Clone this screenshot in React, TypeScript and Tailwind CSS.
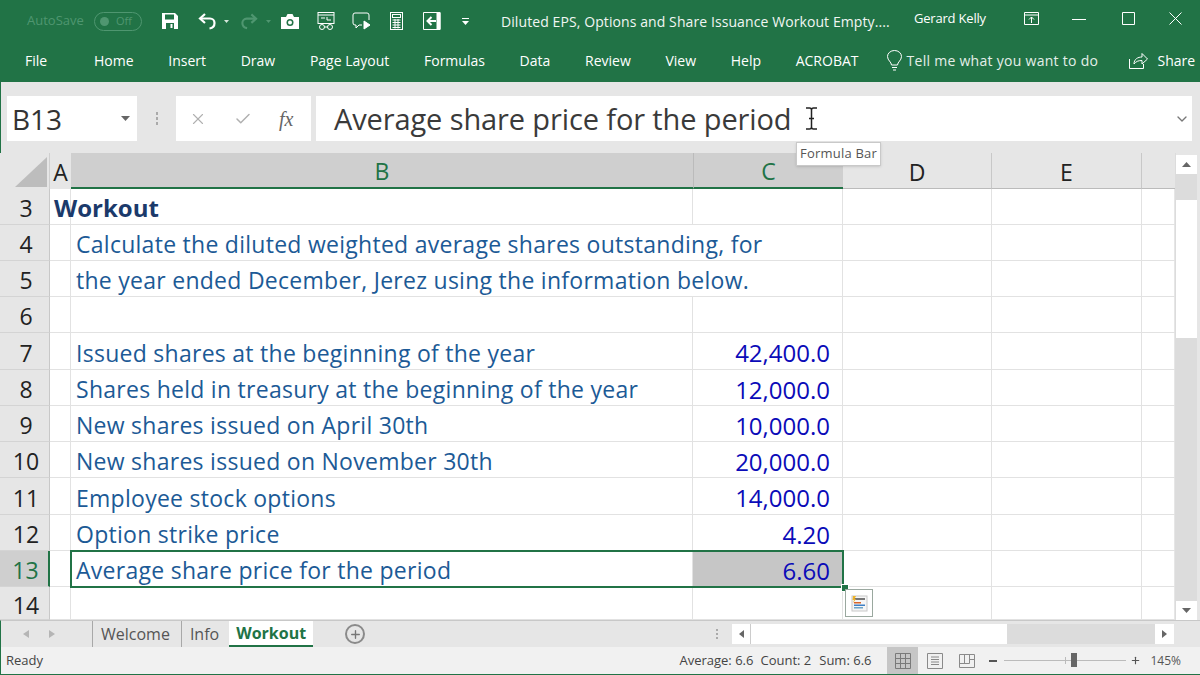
import { Check, ChevronDown, Plus, X } from "lucide-react"

const font = { fontFamily: '"Open Sans", "Noto Sans", sans-serif' }

const tabs = ["Home", "Insert", "Draw", "Page Layout", "Formulas", "Data", "Review", "View", "Help", "ACROBAT"]

const rows = [
  { n: "3", b: "", c: "", title: "Workout", h: "h-[36px]" },
  { n: "4", b: "Calculate the diluted weighted average shares outstanding, for", c: "", h: "h-[36px]", spill: true },
  { n: "5", b: "the year ended December, Jerez using the information below.", c: "", h: "h-[36px]", spill: true },
  { n: "6", b: "", c: "", h: "h-[36px]" },
  { n: "7", b: "Issued shares at the beginning of the year", c: "42,400.0", h: "h-[37px]" },
  { n: "8", b: "Shares held in treasury at the beginning of the year", c: "12,000.0", h: "h-[36px]" },
  { n: "9", b: "New shares issued on April 30th", c: "10,000.0", h: "h-[36px]" },
  { n: "10", b: "New shares issued on November 30th", c: "20,000.0", h: "h-[36px]" },
  { n: "11", b: "Employee stock options", c: "14,000.0", h: "h-[37px]" },
  { n: "12", b: "Option strike price", c: "4.20", h: "h-[36px]" },
  { n: "13", b: "Average share price for the period", c: "6.60", h: "h-[36px]", active: true },
  { n: "14", b: "", c: "", h: "h-[33px]" },
]

const gridCols = "grid grid-cols-[50px_21px_622px_150px_149px_150px_33px]"

function TitleIcons() {
  return (
    <>
      <svg className="ml-[19px] w-[18px] h-[18px]" viewBox="0 0 18 18" fill="white">
        <path d="M1 1h13l3 3v13H1z" />
        <rect x="4" y="2.500" width="9" height="5" fill="#217346" />
        <rect x="5" y="11" width="8" height="6" fill="#217346" />
        <rect x="9.500" y="12" width="2" height="4" fill="white" />
      </svg>
      <svg className="ml-[19px] w-[19px] h-[18px]" viewBox="0 0 19 18" fill="none" stroke="white" strokeWidth="2.200">
        <path d="M7 2 2 6.500 7 11" />
        <path d="M2.500 6.500H12a4.500 4.500 0 0 1 4.500 4.500c0 3-2 5-5 5.500" />
      </svg>
      <svg className="ml-[7px] w-[5px] h-[3px]" viewBox="0 0 5 3" fill="#d6e6dc">
        <path d="M0 0h5L2.500 3z" />
      </svg>
      <svg className="ml-[11px] w-[18px] h-[18px]" viewBox="0 0 19 18" fill="none" stroke="#4f9670" strokeWidth="2.200">
        <path d="M12 2l5 4.500L12 11" />
        <path d="M16.500 6.500H7A4.500 4.500 0 0 0 2.500 11c0 3 2 5 5 5.500" />
      </svg>
      <svg className="ml-[8px] w-[5px] h-[3px]" viewBox="0 0 5 3" fill="#4f9670">
        <path d="M0 0h5L2.500 3z" />
      </svg>
      <svg className="ml-[10px] w-[18px] h-[15px]" viewBox="0 0 18 15">
        <path d="M0 3h5l1.500-3h5L13 3h5v12H0z" fill="white" />
        <circle cx="9" cy="8.500" r="3.500" fill="#217346" />
        <circle cx="9" cy="8.500" r="2" fill="white" />
      </svg>
      <svg className="ml-[18px] w-[18px] h-[18px]" viewBox="0 0 18 18" fill="none" stroke="white" strokeWidth="1">
        <rect x="1" y="0.500" width="16" height="11" />
        <path d="M1 3h16M4 6h4M10 5v3h4" />
        <circle cx="5" cy="15" r="2.500" />
        <circle cx="13" cy="15" r="2.500" />
        <path d="M7.500 15h3" />
      </svg>
      <svg className="ml-[17px] w-[19px] h-[18px]" viewBox="0 0 19 18" fill="none" stroke="white" strokeWidth="1">
        <path d="M3 1h12a2 2 0 0 1 2 2v5M10 13H7l-3 3v-3H3a2 2 0 0 1-2-2V3a2 2 0 0 1 2-2" />
        <path d="M12 9l6 4-6 4z" fill="white" />
      </svg>
      <svg className="ml-[19px] w-[13px] h-[18px]" viewBox="0 0 13 18" fill="none" stroke="white" strokeWidth="1">
        <rect x="0.500" y="0.500" width="12" height="17" />
        <rect x="2.500" y="2.500" width="8" height="3" />
        <path d="M2.500 8h8M2.500 10.500h8M2.500 13h8M2.500 15.500h8M5 7v9.500M8 7v9.500" />
      </svg>
      <svg className="ml-[20px] w-[18px] h-[18px]" viewBox="0 0 18 18" fill="none" stroke="white">
        <path d="M0.500 0.500h16.500v17H0.500z" />
        <path d="M13 9H5M8.500 5 4.500 9l4 4" strokeWidth="2" />
        <path d="M14 0.500h3v17h-3z" fill="white" />
      </svg>
      <svg className="ml-[21px] w-[7px] h-[7px]" viewBox="0 0 7 7" fill="white">
        <path d="M0 0h7v1H0zM0 3h7L3.500 7z" />
      </svg>
    </>
  )
}

function ViewIcons() {
  return (
    <div className="ml-[16px] flex items-center h-full">
      <div className="w-[31px] h-full bg-[#c6c6c6] flex items-center justify-center">
        <svg className="w-[16px] h-[16px]" viewBox="0 0 16 16" fill="none" stroke="#7a7a7a">
          <path d="M0.500 0.500h15v15h-15zM0.500 5.500h15M0.500 10.500h15M5.500 0.500v15M10.500 0.500v15" />
        </svg>
      </div>
      <svg className="ml-[9px] w-[16px] h-[16px]" viewBox="0 0 16 16" fill="none" stroke="#8a8a8a">
        <path d="M0.500 0.500h15v15h-15zM4 4h8M4 6.500h8M4 9h8M4 11.500h8" />
      </svg>
      <svg className="ml-[16px] w-[16px] h-[14px]" viewBox="0 0 16 14" fill="none" stroke="#8a8a8a">
        <path d="M0.500 0.500h15v13h-15zM0.500 9.500h10v-9M5.500 0.500v9M10.500 5.500h5" />
      </svg>
    </div>
  )
}

export default function App() {
  return (
    <div className="w-[1200px] h-[675px] overflow-hidden flex flex-col bg-[#e6e6e6] relative" style={font}>
      {/* title bar */}
      <div className="h-[42px] bg-[#217346] flex items-center text-white shrink-0">
        <span className="ml-[27px] text-[13px] text-[#4f9670] w-[62px]">AutoSave</span>
        <div className="ml-[5px] w-[48px] h-[19px] rounded-full border border-[#4f9670] flex items-center px-[5px] text-[11px] text-[#4f9670]">
          <span className="w-[9px] h-[9px] rounded-full bg-[#4f9670]" />
          <span className="ml-[7px]">Off</span>
        </div>
        <TitleIcons />
        <span className="ml-[32px] text-[14px] w-[396px] whitespace-nowrap text-[#f1f6f3] tracking-[0.09px]">
          Diluted EPS, Options and Share Issuance Workout Empty....
        </span>
        <span className="ml-[17px] mb-[5px] text-[13px] whitespace-nowrap tracking-[-0.2px]">Gerard Kelly</span>
        <svg className="ml-[38px] mb-[5px] w-[15px] h-[13px]" viewBox="0 0 15 13" fill="none" stroke="white">
          <path d="M0.500 0.500h14v12h-14zM0.500 3h14M7.500 11V5M5 7.500l2.500-2.500L10 7.500" />
        </svg>
        <svg className="ml-[33px] mb-[5px] w-[14px] h-[14px]" viewBox="0 0 14 14" stroke="white">
          <path d="M0 7.500h14" />
        </svg>
        <svg className="ml-[36px] mb-[5px] w-[13px] h-[13px]" viewBox="0 0 13 13" fill="none" stroke="white">
          <path d="M0.500 0.500h12v12h-12z" />
        </svg>
        <svg className="ml-[34px] mb-[5px] w-[13px] h-[13px]" viewBox="0 0 13 13" fill="none" stroke="white">
          <path d="M0.500 0.500l12 12M12.500 0.500l-12 12" />
        </svg>
      </div>

      {/* ribbon tabs */}
      <div className="h-[40px] bg-[#217346] flex items-center text-white text-[14px] shrink-0 pb-[4px]">
        <span className="ml-[25px] w-[69px]">File</span>
        <div className="flex gap-[34.7px] whitespace-nowrap">
          {tabs.map((t) => (
            <span key={t}>{t}</span>
          ))}
        </div>
        <svg className="ml-[28px] w-[15px] h-[21px]" viewBox="0 0 15 21" fill="none" stroke="white">
          <path d="M4.500 15c0-3-4-4.500-4-8.500a7 6 0 0 1 14 0c0 4-4 5.500-4 8.500z" />
          <path d="M5 17.500h5M6 20h3" />
        </svg>
        <span className="ml-[5px] whitespace-nowrap text-[#e4efe9] w-[222px] tracking-[0.28px]">Tell me what you want to do</span>
        <svg className="w-[19px] h-[17px]" viewBox="0 0 19 17" fill="none" stroke="white">
          <path d="M0.500 7v9.500h14V12" />
          <path d="M5 12c0-5 4-7 8-7V1.500L18.500 7 13 12V8.500c-4 0-6 1-8 3.500z" />
        </svg>
        <span className="ml-[10px]">Share</span>
      </div>

      {/* formula bar */}
      <div className="h-[71px] flex pt-[14px] shrink-0 border-l border-[#217346]">
        <div className="ml-[6px] w-[130px] h-[45px] bg-white flex items-center justify-between pl-[5px] pr-[7px]">
          <span className="text-[28px] text-[#333]">B13</span>
          <svg className="w-[9px] h-[5px]" viewBox="0 0 9 5" fill="#666">
            <path d="M0 0h9L4.500 5z" />
          </svg>
        </div>
        <div className="w-[39px] h-[45px] flex flex-col items-center justify-center gap-[2px]">
          <span className="w-[2px] h-[3px] bg-[#aaa]" />
          <span className="w-[2px] h-[3px] bg-[#aaa]" />
          <span className="w-[2px] h-[3px] bg-[#aaa]" />
        </div>
        <div className="w-[135px] h-[45px] bg-white flex items-center text-[#b0b0b0]">
          <X className="ml-[13px] w-[18px] h-[18px]" strokeWidth={1.5} />
          <Check className="ml-[27px] w-[18px] h-[18px]" strokeWidth={2} />
          <span
            className="ml-[27px] text-[20px] italic text-[#666]"
            style={{ fontFamily: '"Liberation Serif", serif' }}
          >
            fx
          </span>
        </div>
        <div className="ml-[5px] w-[876px] h-[45px] bg-white flex items-center pl-[18px] pr-[2px]">
          <span className="text-[29px] text-[#3a3a3a] whitespace-nowrap tracking-[-0.12px]">
            Average share price for the period
          </span>
          <svg className="ml-[13px] w-[13px] h-[23px]" viewBox="0 0 13 23" fill="none" stroke="#222" strokeWidth="1.500">
            <path d="M1 1h3.500c1 0 2 1 2 2v17c0 1-1 2-2 2H1M12 1H8.500c-1 0-2 1-2 2v17c0 1 1 2 2 2H12M4 11.500h5" />
          </svg>
          <ChevronDown className="ml-auto w-[16px] h-[16px] text-[#777]" strokeWidth={2} />
        </div>
      </div>

      {/* sheet area */}
      <div className="flex-1 flex border-l border-[#217346] relative min-h-0">
        <div className="w-[1174px] shrink-0 bg-white -ml-px">
          {/* column headers */}
          <div className={`${gridCols} h-[36px] bg-[#e6e6e6] text-[23px] leading-[28px] text-[#222]`}>
            <div className="relative overflow-hidden border-r border-[#cfcfcf]">
              <svg className="absolute right-[2px] bottom-[2px] w-[32px] h-[30px]" viewBox="0 0 32 30" fill="#bdbdbd">
                <path d="M32 0v30H0z" />
              </svg>
            </div>
            <div className="flex items-center justify-center pt-[2px]">A</div>
            <div className="bg-[#cfcfcf] border-b-2 border-[#217346] flex items-center justify-center text-[#217346] pt-[2px]">B</div>
            <div className="bg-[#cfcfcf] border-b-2 border-[#217346] border-l border-l-[#bbb] flex items-center justify-center text-[#217346] pt-[2px]">C</div>
            <div className="border-r border-[#c8c8c8] border-b border-b-[#bbb] flex items-center justify-center pt-[2px]">D</div>
            <div className="border-r border-[#c8c8c8] border-b border-b-[#bbb] flex items-center justify-center pt-[2px]">E</div>
            <div className="border-b border-[#bbb]" />
          </div>

          {/* rows */}
          {rows.map((r) => (
            <div key={r.n} className={`${gridCols} ${r.h} text-[23px] leading-[28px]`}>
              <div
                className={`flex items-center justify-center pl-[3px] pt-[3px] border-b border-[#d4d4d4] ${
                  r.active ? "bg-[#cfcfcf] text-[#217346] border-r-2 border-r-[#217346]" : "bg-[#e6e6e6] text-[#222] border-r border-r-[#c8c8c8]"
                }`}
              >
                {r.n}
              </div>
              <div className="border-r border-b border-[#e2e2e2] flex items-center whitespace-nowrap pl-[4px] pt-[2px]">
                {r.title && <span className="font-bold text-[#1b3a6b] z-10 text-[24px]">{r.title}</span>}
              </div>
              <div className={`${r.spill ? "border-b" : "border-r border-b"} border-[#e2e2e2] flex items-center pl-[5px] pt-[3px] whitespace-nowrap text-[#1c5a96] tracking-[0.27px]`}>
                <span className="z-10">{r.b}</span>
              </div>
              <div
                className={`border-r border-b border-[#e2e2e2] flex items-center justify-end pr-[12px] pt-[4px] text-[24px] text-[#0b0bb8] ${
                  r.active ? "bg-[#c6c6c6]" : ""
                }`}
              >
                {r.c}
              </div>
              <div className="border-r border-b border-[#e2e2e2]" />
              <div className="border-r border-b border-[#e2e2e2]" />
              <div className="border-b border-[#e2e2e2]" />
            </div>
          ))}
        </div>

        {/* vertical scrollbar */}
        <div className="w-[22px] bg-[#e6e6e6] flex flex-col ml-[1px] border-l border-[#dcdcdc]">
          <div className="h-[19px] mt-[2px] bg-white flex items-center justify-center">
            <svg className="w-[9px] h-[5px]" viewBox="0 0 9 5" fill="#666">
              <path d="M4.500 0 9 5H0z" />
            </svg>
          </div>
          <div className="h-[26px] bg-[#dcdcdc]" />
          <div className="h-[138px] bg-white" />
          <div className="flex-1 bg-[#dcdcdc]" />
          <div className="h-[19px] bg-white flex items-center justify-center">
            <svg className="w-[9px] h-[5px]" viewBox="0 0 9 5" fill="#666">
              <path d="M0 0h9L4.500 5z" />
            </svg>
          </div>
        </div>

        {/* selection border */}
        <div className="absolute left-[69px] top-[397px] w-[774px] h-[38px] border-2 border-[#217346] pointer-events-none" />
        <div className="absolute left-[840px] top-[431px] w-[6px] h-[6px] bg-[#217346] border border-white box-content" />

        {/* quick analysis button */}
        <div className="absolute left-[844px] top-[436px] w-[28px] h-[28px] bg-white border border-[#9aa89f] flex items-center justify-center">
          <svg className="w-[17px] h-[17px]" viewBox="0 0 17 17">
            <rect x="1" y="1" width="15" height="15" fill="#f6f6f6" stroke="#c8c8c8" />
            <path d="M3 3h11v2H3z" fill="#777" />
            <path d="M3 7h7v1.500H3z" fill="#d9642b" />
            <path d="M3 9.500h11v1.500H3z" fill="#3f7fc4" />
            <path d="M3 12h9v1.500H3z" fill="#6da5c9" />
            <path d="M2 1h3L3.500 4H5L2 8l1-3H1.500z" fill="#f0b429" />
          </svg>
        </div>

        {/* tooltip */}
        <div className="absolute left-[795px] top-[-11px] w-[85px] h-[24px] bg-white border border-[#c9c9c9] shadow-sm text-[13px] text-[#555] flex items-center justify-center whitespace-nowrap tracking-[0.2px]">
          Formula Bar
        </div>
      </div>

      {/* sheet tabs */}
      <div className="h-[27px] flex items-center border-l border-[#217346] border-t border-t-[#c8c8c8] shrink-0 text-[16px]">
        <svg className="ml-[22px] w-[6px] h-[8px]" viewBox="0 0 6 8" fill="#b5b5b5">
          <path d="M6 0v8L0 4z" />
        </svg>
        <svg className="ml-[20px] w-[6px] h-[8px]" viewBox="0 0 6 8" fill="#b5b5b5">
          <path d="M0 0v8l6-4z" />
        </svg>
        <div className="ml-[37px] border-l border-[#a8a8a8] h-full flex items-center pl-[8px] pr-[11px] text-[#555]">Welcome</div>
        <div className="border-l border-[#a8a8a8] h-full flex items-center pl-[8px] pr-[10px] text-[#555]">Info</div>
        <div className="bg-white h-full flex items-center pl-[7px] pr-[7px] font-bold text-[#217346] border-b-2 border-[#217346]">Workout</div>
        <div className="ml-[32px] w-[20px] h-[20px] rounded-full border-2 border-[#8a8a8a] flex items-center justify-center text-[#777]">
          <Plus className="w-[13px] h-[13px]" strokeWidth={2.5} />
        </div>
        <div className="ml-[351px] flex flex-col gap-[2px]">
          <span className="w-[2px] h-[2px] bg-[#aaa]" />
          <span className="w-[2px] h-[2px] bg-[#aaa]" />
          <span className="w-[2px] h-[2px] bg-[#aaa]" />
        </div>
        <div className="ml-[14px] w-[19px] h-[20px] bg-white flex items-center justify-center border-r border-[#ccc]">
          <svg className="w-[5px] h-[8px]" viewBox="0 0 5 8" fill="#666">
            <path d="M5 0v8L0 4z" />
          </svg>
        </div>
        <div className="w-[256px] h-[20px] bg-white" />
        <div className="w-[148px] h-[20px] bg-[#dcdcdc]" />
        <div className="w-[19px] h-[20px] bg-white flex items-center justify-center">
          <svg className="w-[5px] h-[8px]" viewBox="0 0 5 8" fill="#666">
            <path d="M0 0v8l5-4z" />
          </svg>
        </div>
      </div>

      {/* status bar */}
      <div className="h-[28px] bg-[#f1f1f1] flex items-center border-l border-b border-[#217346] shrink-0 text-[13px] text-[#444]">
        <span className="ml-[5px] pt-[1px]">Ready</span>
        <span className="ml-auto whitespace-nowrap pt-[1px]">Average: 6.6</span>
        <span className="ml-[7px] whitespace-nowrap pt-[1px]">Count: 2</span>
        <span className="ml-[8px] whitespace-nowrap pt-[1px]">Sum: 6.6</span>
        <ViewIcons />
        <div className="ml-[14px] w-[8px] h-[2px] bg-[#555]" />
        <div className="ml-[7px] w-[122px] h-[1px] bg-[#bbb] relative">
          <span className="absolute left-[61px] top-[-3px] w-px h-[7px] bg-[#bbb]" />
          <span className="absolute left-[67px] top-[-7px] w-[6px] h-[14px] bg-[#666]" />
        </div>
        <Plus className="ml-[4px] w-[11px] h-[11px] text-[#555]" strokeWidth={2.5} />
        <span className="ml-[9px] mr-[19px] text-[12px] text-[#555]">145%</span>
      </div>
    </div>
  )
}
